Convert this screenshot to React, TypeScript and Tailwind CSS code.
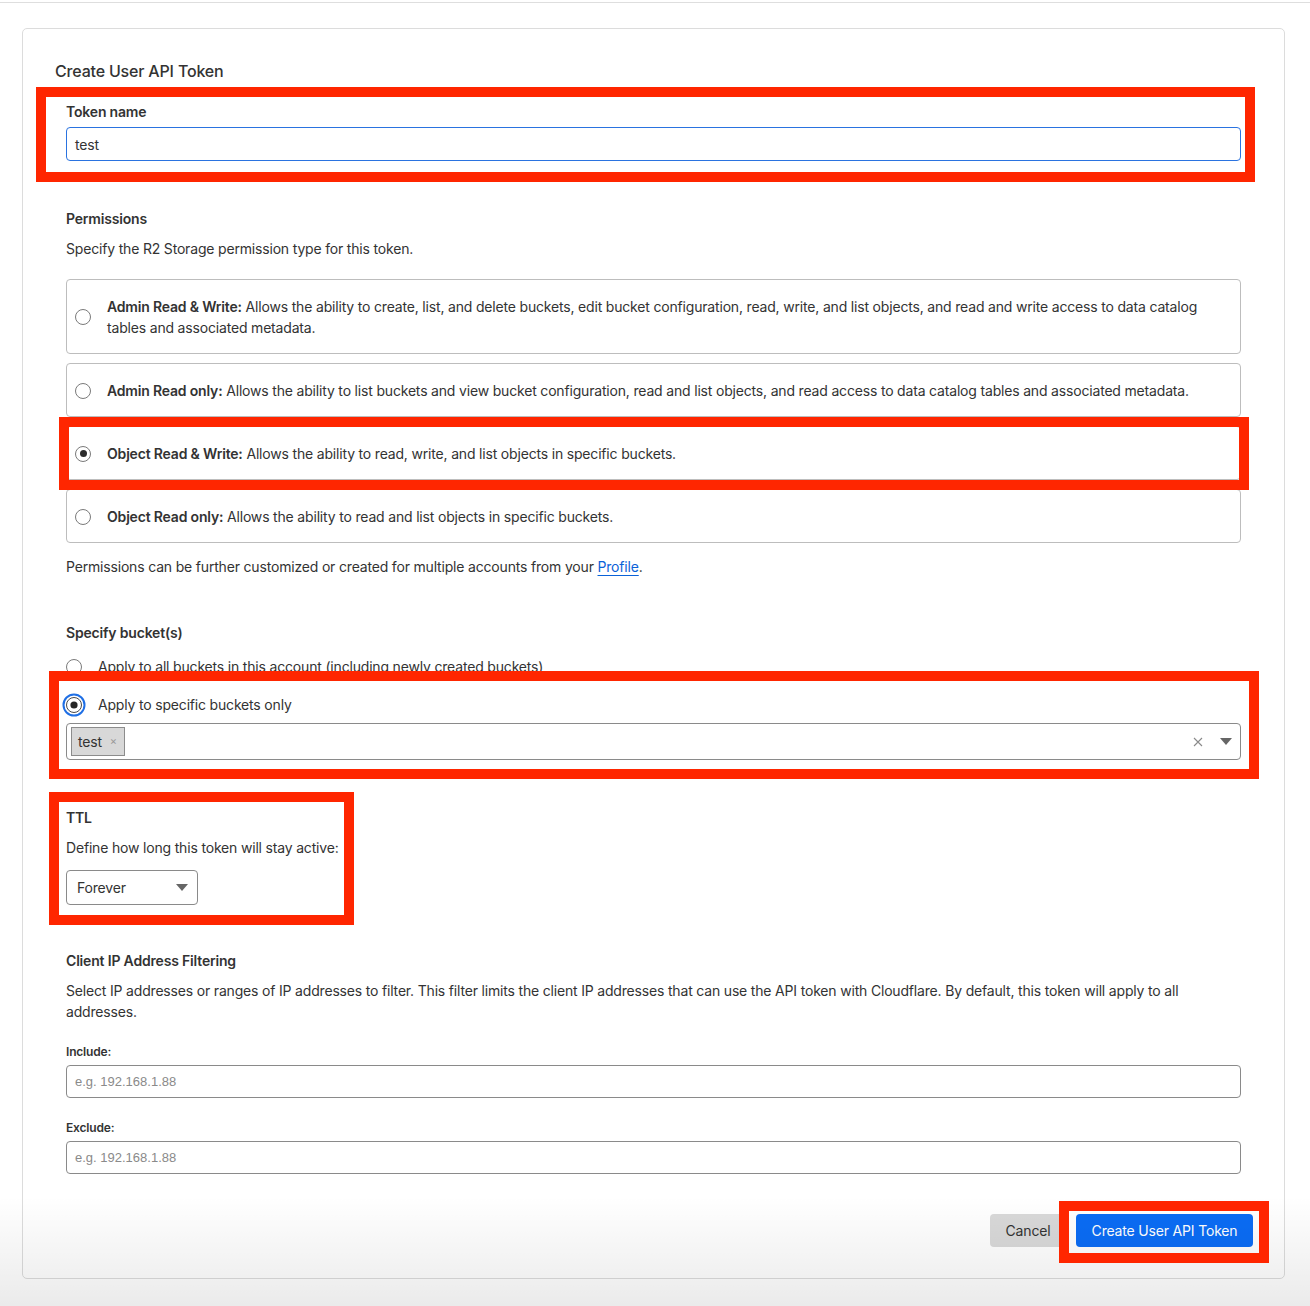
import React from "react";

type Perm = { id: string; title: string; body: string; checked?: boolean };

const perms: Perm[] = [
  {
    id: "admin-rw",
    title: "Admin Read & Write:",
    body: " Allows the ability to create, list, and delete buckets, edit bucket configuration, read, write, and list objects, and read and write access to data catalog tables and associated metadata.",
  },
  {
    id: "admin-r",
    title: "Admin Read only:",
    body: " Allows the ability to list buckets and view bucket configuration, read and list objects, and read access to data catalog tables and associated metadata.",
  },
  {
    id: "object-rw",
    title: "Object Read & Write:",
    body: " Allows the ability to read, write, and list objects in specific buckets.",
    checked: true,
  },
  {
    id: "object-r",
    title: "Object Read only:",
    body: " Allows the ability to read and list objects in specific buckets.",
  },
];

function Radio({ checked }: { checked?: boolean }) {
  return (
    <span className="flex h-4 w-4 shrink-0 items-center justify-center rounded-full border border-[#7a7a7a] bg-white">
      {checked && <span className="h-[7px] w-[7px] rounded-full bg-[#2b2b2b]" />}
    </span>
  );
}

function FocusRadio() {
  return (
    <svg width="24" height="24" viewBox="0 0 24 24" className="shrink-0">
      <circle cx="12" cy="12" r="10.5" fill="none" stroke="#1f6fe5" strokeWidth="2" />
      <circle cx="12" cy="12" r="7.5" fill="#fff" stroke="#4a4a4a" strokeWidth="1" />
      <circle cx="12" cy="12" r="3.6" fill="#262626" />
    </svg>
  );
}

function Caret() {
  return (
    <svg width="12" height="7" viewBox="0 0 12 7">
      <path d="M0 0 L12 0 L6 7 Z" fill="#666" />
    </svg>
  );
}

function Mark({ className }: { className: string }) {
  return <div className={`pointer-events-none absolute border-[10px] border-[#ff2600] ${className}`} />;
}

export default function App() {
  return (
    <div
      className="relative min-h-[1306px] w-[1310px] overflow-hidden bg-white text-[14px] tracking-[-0.18px] text-[#333]"
      style={{ fontFamily: "Inter, 'Noto Sans', sans-serif" }}
    >
      <div className="pt-[2px]">
        <div className="border-t border-[#dedede]" />
      </div>

      <div className="ml-[22px] mt-[25px] h-[1251px] w-[1263px] rounded-[5px] border border-[#dcdcdc] bg-white pl-[32px] pr-[31px] pt-[32px]">
        <h1 className="text-[16px] font-medium leading-[20px] text-[#333]">Create User API Token</h1>

        <div className="pl-[11px] pr-[12px]">
          {/* token name */}
          <div className="mt-[21px]">
            <label className="block font-semibold leading-[20px]">Token name</label>
            <div className="mt-[5px] flex h-[34px] items-center rounded-[4px] border border-[#2a73e0] px-[8px]">
              <span>test</span>
            </div>
          </div>

          {/* permissions */}
          <div className="mt-[48px]">
            <p className="font-semibold leading-[20px]">Permissions</p>
            <p className="mt-[10px] leading-[20px]">Specify the R2 Storage permission type for this token.</p>
            <div className="mt-[20px] flex flex-col gap-[9px]">
              {perms.map((p) => (
                <div
                  key={p.id}
                  className="flex items-center gap-[16px] rounded-[4px] border border-[#bdbdbd] pb-[15px] pl-[8px] pr-[20px] pt-[16px]"
                >
                  <Radio checked={p.checked} />
                  <p className="leading-[21px]">
                    <span className="font-semibold">{p.title}</span>
                    {p.body}
                  </p>
                </div>
              ))}
            </div>
            <p className="mt-[14px] leading-[20px]">
              Permissions can be further customized or created for multiple accounts from your{" "}
              <a href="#" className="text-[#0a62d8] underline underline-offset-[3px]">
                Profile
              </a>
              .
            </p>
          </div>

          {/* buckets */}
          <div className="mt-[46px]">
            <p className="font-semibold leading-[20px]">Specify bucket(s)</p>
            <div className="mt-[14px] flex items-center gap-[16px]">
              <Radio />
              <span className="leading-[20px]">Apply to all buckets in this account (including newly created buckets)</span>
            </div>
            <div className="-ml-[4px] mt-[16px] flex items-center gap-[12px]">
              <FocusRadio />
              <span className="leading-[20px]">Apply to specific buckets only</span>
            </div>
            <div className="mt-[6px] flex h-[37px] items-center rounded-[4px] border border-[#8a8a8a] pl-[4px] pr-[8px]">
              <span className="flex h-[29px] w-[54px] items-center gap-[8px] border border-[#8c8c8c] bg-[#d8d8d8] pl-[6px]">
                <span className="text-[#333]">test</span>
                <span className="text-[11px] text-[#999]">×</span>
              </span>
              <span className="flex-1" />
              <svg width="10" height="10" viewBox="0 0 10 10" className="mr-[17px]">
                <path d="M1 1 L9 9 M9 1 L1 9" stroke="#8a8a8a" strokeWidth="1.1" />
              </svg>
              <Caret />
            </div>
          </div>

          {/* TTL */}
          <div className="mt-[48px]">
            <p className="font-semibold leading-[20px]">TTL</p>
            <p className="mt-[10px] leading-[20px]">Define how long this token will stay active:</p>
            <div className="mt-[12px] flex h-[35px] w-[132px] items-center justify-between rounded-[4px] border border-[#8a8a8a] pl-[10px] pr-[9px]">
              <span>Forever</span>
              <Caret />
            </div>
          </div>

          {/* IP filtering */}
          <div className="mt-[46px]">
            <p className="font-semibold leading-[20px]">Client IP Address Filtering</p>
            <p className="mt-[9px] leading-[21px]">
              Select IP addresses or ranges of IP addresses to filter. This filter limits the client IP addresses that can use the API token with Cloudflare. By default, this token will apply to all addresses.
            </p>
            <p className="mt-[22px] text-[12px] font-semibold leading-[16px]">Include:</p>
            <div
              className="mt-[5px] flex h-[33px] items-center rounded-[4px] border border-[#8a8a8a] px-[8px] text-[13px] tracking-normal text-[#8a8a8a]"
              style={{ fontFamily: "'Liberation Sans', Arial, sans-serif" }}
            >
              e.g. 192.168.1.88
            </div>
            <p className="mt-[22px] text-[12px] font-semibold leading-[16px]">Exclude:</p>
            <div
              className="mt-[5px] flex h-[33px] items-center rounded-[4px] border border-[#8a8a8a] px-[8px] text-[13px] tracking-normal text-[#8a8a8a]"
              style={{ fontFamily: "'Liberation Sans', Arial, sans-serif" }}
            >
              e.g. 192.168.1.88
            </div>
          </div>
        </div>

        <div className="mt-[40px] flex justify-end gap-[10px]">
          <button className="h-[33px] w-[76px] rounded-[4px] bg-[#d9d9d9] text-[#333]">Cancel</button>
          <button className="h-[33px] w-[177px] rounded-[4px] bg-[#0a6cf5] text-white">Create User API Token</button>
        </div>
      </div>

      {/* fade at bottom of the capture */}
      <div className="pointer-events-none absolute bottom-0 left-0 h-[110px] w-full bg-gradient-to-b from-transparent to-black/[0.08]" />

      {/* annotation boxes */}
      <Mark className="left-[36px] top-[87px] h-[95px] w-[1219px]" />
      <Mark className="left-[59px] top-[417px] h-[73px] w-[1190px]" />
      <Mark className="left-[49px] top-[671px] h-[108px] w-[1210px]" />
      <Mark className="left-[49px] top-[792px] h-[133px] w-[305px]" />
      <Mark className="left-[1059px] top-[1201px] h-[62px] w-[210px]" />
    </div>
  );
}
